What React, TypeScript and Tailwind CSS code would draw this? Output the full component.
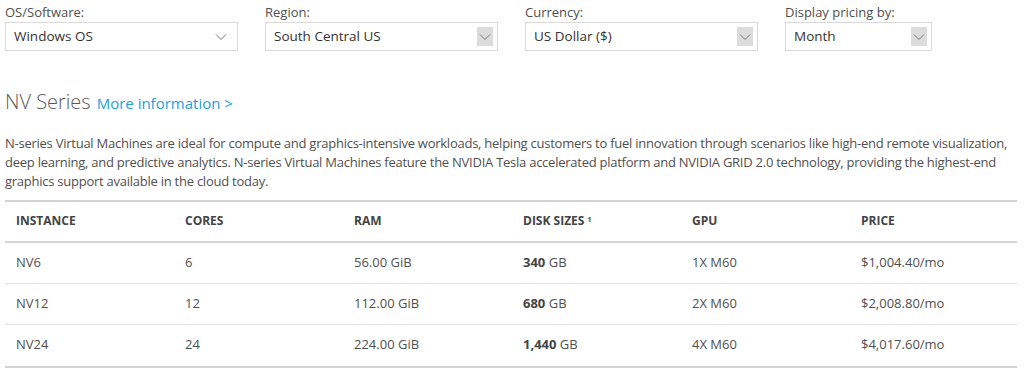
import React from 'react'

const font = { fontFamily: '"Open Sans", "Liberation Sans", sans-serif' }

const filters = [
  { label: 'OS/Software:', value: 'Windows OS', plain: true, width: 'w-[233px]' },
  { label: 'Region:', value: 'South Central US', plain: false, width: 'w-[233px]' },
  { label: 'Currency:', value: 'US Dollar ($)', plain: false, width: 'w-[233px]' },
  { label: 'Display pricing by:', value: 'Month', plain: false, width: 'w-[147px]' },
]

const rows = [
  { name: 'NV6', cores: '6', ram: '56.00 GiB', disk: '340', gpu: '1X M60', price: '$1,004.40/mo' },
  { name: 'NV12', cores: '12', ram: '112.00 GiB', disk: '680', gpu: '2X M60', price: '$2,008.80/mo' },
  { name: 'NV24', cores: '24', ram: '224.00 GiB', disk: '1,440', gpu: '4X M60', price: '$4,017.60/mo' },
]

const Chevron = () => (
  <svg width="12" height="8" viewBox="0 0 12 8" fill="none">
    <path d="M1 1.5L6 6.5L11 1.5" stroke="#777" strokeWidth="1" />
  </svg>
)

const cell = 'w-[169px] shrink-0 pl-[11px]'

export default function App() {
  return (
    <div className="w-[1024px] h-[370px] bg-white overflow-hidden text-[#505050]" style={font}>
      {/* filters */}
      <div className="flex pl-[5px] pt-[3px]">
        {filters.map((f) => (
          <div key={f.label} className="w-[260px] shrink-0">
            <div className="text-[13px] leading-[18px] mb-[1px]">{f.label}</div>
            <div className={`${f.width} h-[29px] border border-[#d9d9d9] flex items-center justify-between pl-[8px] pr-[4px]`}>
              <span className="text-[13.5px] text-[#333]">{f.value}</span>
              {f.plain ? (
                <span className="pr-[6px] flex"><Chevron /></span>
              ) : (
                <span className="w-[16px] h-[19px] bg-[#dcdcdc] flex items-center justify-center">
                  <Chevron />
                </span>
              )}
            </div>
          </div>
        ))}
      </div>

      {/* heading */}
      <div className="pl-[5px] mt-[39px] flex items-baseline gap-[6px]">
        <h2 className="text-[20px] font-light text-[#5a5a5a] leading-[24px]">NV Series</h2>
        <a className="text-[15px] text-[#1ba1e2]">More information &gt;</a>
      </div>

      <p className="pl-[5px] pr-[10px] mt-[19px] text-[13px] leading-[19px] tracking-[-0.25px]">
        N-series Virtual Machines are ideal for compute and graphics-intensive workloads, helping customers to fuel innovation through scenarios like high-end remote visualization, deep learning, and predictive analytics. N-series Virtual Machines feature the NVIDIA Tesla accelerated platform and NVIDIA GRID 2.0 technology, providing the highest-end graphics support available in the cloud today.
      </p>

      {/* table */}
      <div className="ml-[5px] w-[1012px] mt-[9px] border-t-2 border-b-2 border-[#d4d4d4]">
        <div className="flex h-[41px] items-center text-[12px] font-bold text-[#444] border-b-2 border-[#d4d4d4]">
          <div className={cell}>INSTANCE</div>
          <div className={cell}>CORES</div>
          <div className={cell}>RAM</div>
          <div className={cell}>DISK SIZES <sup className="text-[7px]">1</sup></div>
          <div className={cell}>GPU</div>
          <div className={cell}>PRICE</div>
        </div>
        {rows.map((r, i) => (
          <div
            key={r.name}
            className={`flex h-[41px] items-center text-[13px] ${i < rows.length - 1 ? 'border-b border-[#e3e3e3]' : ''}`}
          >
            <div className={cell}>{r.name}</div>
            <div className={cell}>{r.cores}</div>
            <div className={cell}>{r.ram}</div>
            <div className={cell}><b className="font-bold text-[#444]">{r.disk}</b> GB</div>
            <div className={cell}>{r.gpu}</div>
            <div className={cell}>{r.price}</div>
          </div>
        ))}
      </div>
    </div>
  )
}
